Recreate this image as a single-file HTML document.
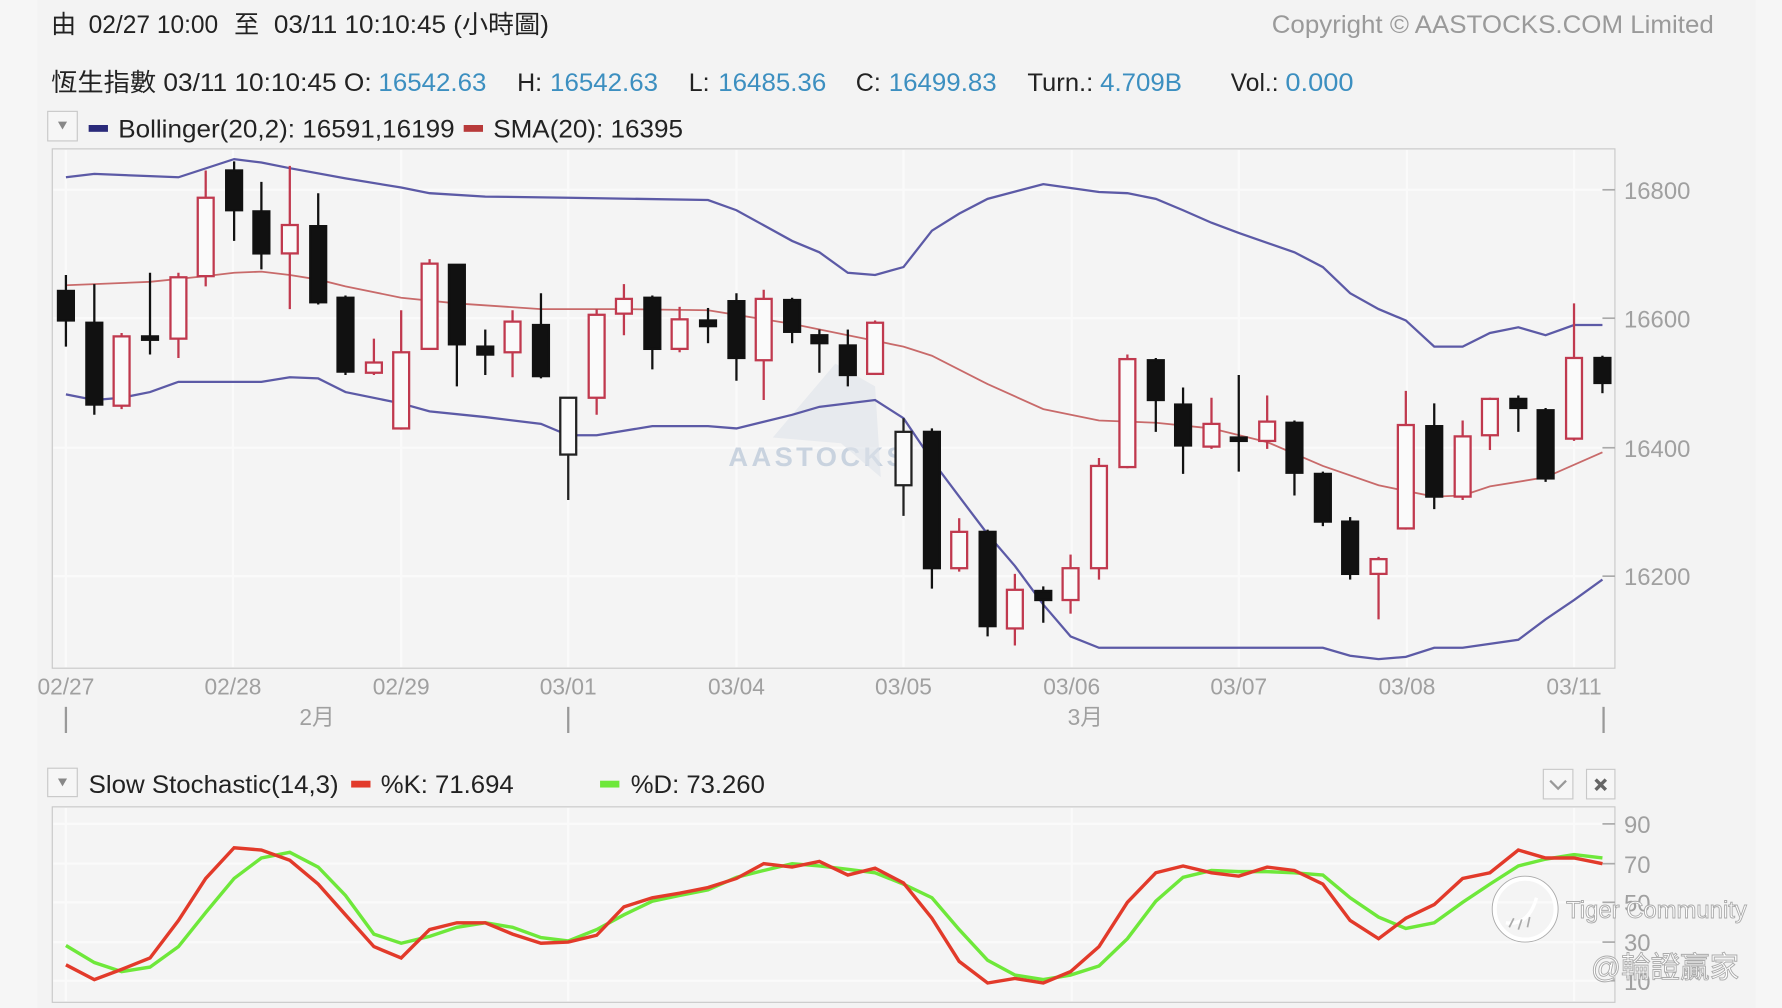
<!DOCTYPE html>
<html><head><meta charset="utf-8"><style>
html,body{margin:0;padding:0;background:#f4f4f4;}
svg{display:block;}
text{font-family:"Liberation Sans","Noto Sans CJK TC",sans-serif;}
</style></head><body>
<svg width="1782" height="1008" viewBox="0 0 1568 887" preserveAspectRatio="none" xmlns="http://www.w3.org/2000/svg">
<rect width="1568" height="887" fill="#f6f6f6"/>
<rect x="33" y="0" width="1512" height="887" fill="#f3f3f3"/>
<g font-size="22" fill="#222">
<text x="45" y="29">由</text>
<text x="78" y="29" textLength="114" lengthAdjust="spacingAndGlyphs">02/27 10:00</text>
<text x="206" y="29">至</text>
<text x="241" y="29" textLength="242" lengthAdjust="spacingAndGlyphs">03/11 10:10:45 (小時圖)</text>
</g>
<text x="1119" y="29" font-size="22" fill="#9a9a9a" textLength="389" lengthAdjust="spacingAndGlyphs">Copyright © AASTOCKS.COM Limited</text>
<g font-size="22" fill="#222">
<text x="45" y="80" textLength="282" lengthAdjust="spacingAndGlyphs">恆生指數 03/11 10:10:45 O:</text>
<text x="333" y="80" fill="#3c8fc0" textLength="95" lengthAdjust="spacingAndGlyphs">16542.63</text>
<text x="455" y="80">H:</text>
<text x="484" y="80" fill="#3c8fc0" textLength="95" lengthAdjust="spacingAndGlyphs">16542.63</text>
<text x="606" y="80">L:</text>
<text x="632" y="80" fill="#3c8fc0" textLength="95" lengthAdjust="spacingAndGlyphs">16485.36</text>
<text x="753" y="80">C:</text>
<text x="782" y="80" fill="#3c8fc0" textLength="95" lengthAdjust="spacingAndGlyphs">16499.83</text>
<text x="904" y="80" textLength="58" lengthAdjust="spacingAndGlyphs">Turn.:</text>
<text x="968" y="80" fill="#3c8fc0" textLength="72" lengthAdjust="spacingAndGlyphs">4.709B</text>
<text x="1083" y="80" textLength="42" lengthAdjust="spacingAndGlyphs">Vol.:</text>
<text x="1131" y="80" fill="#3c8fc0" textLength="60" lengthAdjust="spacingAndGlyphs">0.000</text>
</g>
<rect x="42" y="98" width="26" height="26" fill="#f6f6f6" stroke="#c8c8c8"/>
<path d="M51 107 L59 107 L55 114Z" fill="#888"/>
<rect x="78" y="110" width="17" height="6" fill="#2a2a7a"/>
<text x="104" y="121" font-size="22" fill="#222" textLength="296" lengthAdjust="spacingAndGlyphs">Bollinger(20,2): 16591,16199</text>
<rect x="408" y="110" width="17" height="6" fill="#b83a3a"/>
<text x="434" y="121" font-size="22" fill="#222" textLength="167" lengthAdjust="spacingAndGlyphs">SMA(20): 16395</text>
<!-- main chart -->
<rect x="46" y="131" width="1375" height="457" fill="#f4f4f4" stroke="#c8c8c8"/>
<g stroke="#fafafa" stroke-width="2">
<line x1="58" y1="132" x2="58" y2="587"/><line x1="205" y1="132" x2="205" y2="587"/><line x1="353" y1="132" x2="353" y2="587"/><line x1="500" y1="132" x2="500" y2="587"/><line x1="648" y1="132" x2="648" y2="587"/><line x1="795" y1="132" x2="795" y2="587"/><line x1="943" y1="132" x2="943" y2="587"/><line x1="1090" y1="132" x2="1090" y2="587"/><line x1="1238" y1="132" x2="1238" y2="587"/><line x1="1385" y1="132" x2="1385" y2="587"/>
<line x1="47" y1="167" x2="1420" y2="167"/><line x1="47" y1="280" x2="1420" y2="280"/><line x1="47" y1="394" x2="1420" y2="394"/><line x1="47" y1="507" x2="1420" y2="507"/>
</g>
<g stroke="#aaa" stroke-width="1.5"><line x1="1410" y1="167" x2="1421" y2="167"/><line x1="1410" y1="280" x2="1421" y2="280"/><line x1="1410" y1="394" x2="1421" y2="394"/><line x1="1410" y1="507" x2="1421" y2="507"/></g>
<g font-size="21" fill="#a0a0a0"><text x="1429" y="175">16800</text><text x="1429" y="288">16600</text><text x="1429" y="402">16400</text><text x="1429" y="515">16200</text></g>
<text x="720" y="410" font-size="24" fill="#c9d3df" text-anchor="middle" font-weight="bold" letter-spacing="3">AASTOCKS</text>
<path d="M680 385 L735 320 L770 340 L775 420 L740 390 Z" fill="#dde3ea" opacity="0.6"/>
<polyline fill="none" stroke="#5c5aa6" stroke-width="2" points="58,156 83,153 132,155 157,156 206,140 230,143 255,148 304,157 353,165 378,170 427,173 500,174 623,176 648,185 697,212 721,222 746,240 770,242 795,235 820,203 844,188 869,175 918,162 967,169 992,170 1017,175 1041,185 1066,196 1090,205 1139,222 1164,235 1188,258 1213,272 1237,282 1262,305 1287,305 1311,293 1336,288 1360,295 1385,286 1410,286"/>
<polyline fill="none" stroke="#5c5aa6" stroke-width="2" points="58,347 83,352 107,350 132,345 157,336 230,336 255,332 280,333 304,345 353,355 378,362 427,367 476,373 500,383 525,383 574,375 623,375 648,377 697,365 721,358 770,352 795,368 820,405 844,437 869,470 893,498 918,532 942,560 967,570 992,570 1090,570 1139,570 1164,570 1188,577 1213,580 1237,578 1262,570 1287,570 1336,563 1360,545 1385,528 1410,510"/>
<polyline fill="none" stroke="#c86a6a" stroke-width="1.6" points="58,251 83,250 132,248 181,243 206,240 230,239 255,242 280,246 304,252 353,262 402,267 476,272 549,272 623,273 697,285 746,295 795,305 820,313 869,338 918,360 967,370 1017,372 1066,377 1115,389 1164,410 1213,427 1237,432 1262,437 1287,436 1311,428 1360,420 1410,398"/>
<g stroke-width="2">
<g stroke="#111" fill="#111">
<line x1="58" y1="242" x2="58" y2="305"/><rect x="51" y="256" width="14" height="26"/>
<line x1="83" y1="250" x2="83" y2="365"/><rect x="76" y="284" width="14" height="72"/>
<line x1="132" y1="240" x2="132" y2="312"/><rect x="125" y="296" width="14" height="3"/>
<line x1="206" y1="142" x2="206" y2="212"/><rect x="199" y="150" width="14" height="35"/>
<line x1="230" y1="160" x2="230" y2="237"/><rect x="223" y="186" width="14" height="37"/>
<line x1="280" y1="170" x2="280" y2="268"/><rect x="273" y="199" width="14" height="67"/>
<line x1="304" y1="260" x2="304" y2="330"/><rect x="297" y="262" width="14" height="65"/>
<line x1="402" y1="233" x2="402" y2="340"/><rect x="395" y="233" width="14" height="70"/>
<line x1="427" y1="290" x2="427" y2="330"/><rect x="420" y="305" width="14" height="7"/>
<line x1="476" y1="258" x2="476" y2="333"/><rect x="469" y="286" width="14" height="45"/>
<line x1="574" y1="260" x2="574" y2="325"/><rect x="567" y="262" width="14" height="45"/>
<line x1="623" y1="271" x2="623" y2="302"/><rect x="616" y="282" width="14" height="5"/>
<line x1="648" y1="258" x2="648" y2="335"/><rect x="641" y="265" width="14" height="50"/>
<line x1="697" y1="262" x2="697" y2="302"/><rect x="690" y="264" width="14" height="28"/>
<line x1="721" y1="290" x2="721" y2="328"/><rect x="714" y="295" width="14" height="7"/>
<line x1="746" y1="290" x2="746" y2="340"/><rect x="739" y="304" width="14" height="26"/>
<line x1="820" y1="377" x2="820" y2="518"/><rect x="813" y="380" width="14" height="120"/>
<line x1="869" y1="466" x2="869" y2="560"/><rect x="862" y="468" width="14" height="83"/>
<line x1="918" y1="516" x2="918" y2="548"/><rect x="911" y="520" width="14" height="8"/>
<line x1="1017" y1="315" x2="1017" y2="380"/><rect x="1010" y="317" width="14" height="35"/>
<line x1="1041" y1="341" x2="1041" y2="417"/><rect x="1034" y="356" width="14" height="36"/>
<line x1="1090" y1="330" x2="1090" y2="415"/><rect x="1083" y="385" width="14" height="3"/>
<line x1="1139" y1="370" x2="1139" y2="436"/><rect x="1132" y="372" width="14" height="44"/>
<line x1="1164" y1="415" x2="1164" y2="463"/><rect x="1157" y="417" width="14" height="42"/>
<line x1="1188" y1="455" x2="1188" y2="510"/><rect x="1181" y="459" width="14" height="46"/>
<line x1="1262" y1="355" x2="1262" y2="448"/><rect x="1255" y="375" width="14" height="62"/>
<line x1="1336" y1="348" x2="1336" y2="380"/><rect x="1329" y="351" width="14" height="8"/>
<line x1="1360" y1="359" x2="1360" y2="424"/><rect x="1353" y="361" width="14" height="60"/>
<line x1="1410" y1="313" x2="1410" y2="346"/><rect x="1403" y="315" width="14" height="22"/>
</g>
<g stroke="#222" fill="#fafafa">
<line x1="500" y1="350" x2="500" y2="440"/><rect x="493" y="350" width="14" height="50"/>
<line x1="795" y1="368" x2="795" y2="454"/><rect x="788" y="380" width="14" height="47"/>
</g>
<g stroke="#c0394e" fill="#fafafa">
<line x1="107" y1="293" x2="107" y2="360"/><rect x="100" y="296" width="14" height="61"/>
<line x1="157" y1="240" x2="157" y2="315"/><rect x="150" y="244" width="14" height="54"/>
<line x1="181" y1="150" x2="181" y2="252"/><rect x="174" y="174" width="14" height="69"/>
<line x1="255" y1="146" x2="255" y2="272"/><rect x="248" y="198" width="14" height="25"/>
<line x1="329" y1="298" x2="329" y2="330"/><rect x="322" y="319" width="14" height="9"/>
<line x1="353" y1="273" x2="353" y2="378"/><rect x="346" y="310" width="14" height="67"/>
<line x1="378" y1="228" x2="378" y2="308"/><rect x="371" y="232" width="14" height="75"/>
<line x1="451" y1="273" x2="451" y2="332"/><rect x="444" y="283" width="14" height="27"/>
<line x1="525" y1="272" x2="525" y2="365"/><rect x="518" y="277" width="14" height="73"/>
<line x1="549" y1="250" x2="549" y2="295"/><rect x="542" y="263" width="14" height="13"/>
<line x1="598" y1="270" x2="598" y2="310"/><rect x="591" y="281" width="14" height="26"/>
<line x1="672" y1="255" x2="672" y2="352"/><rect x="665" y="263" width="14" height="54"/>
<line x1="770" y1="282" x2="770" y2="330"/><rect x="763" y="284" width="14" height="45"/>
<line x1="844" y1="456" x2="844" y2="503"/><rect x="837" y="468" width="14" height="32"/>
<line x1="893" y1="505" x2="893" y2="568"/><rect x="886" y="519" width="14" height="34"/>
<line x1="942" y1="488" x2="942" y2="540"/><rect x="935" y="500" width="14" height="28"/>
<line x1="967" y1="403" x2="967" y2="510"/><rect x="960" y="410" width="14" height="90"/>
<line x1="992" y1="312" x2="992" y2="412"/><rect x="985" y="316" width="14" height="95"/>
<line x1="1066" y1="350" x2="1066" y2="395"/><rect x="1059" y="373" width="14" height="20"/>
<line x1="1115" y1="348" x2="1115" y2="395"/><rect x="1108" y="371" width="14" height="17"/>
<line x1="1213" y1="490" x2="1213" y2="545"/><rect x="1206" y="492" width="14" height="13"/>
<line x1="1237" y1="344" x2="1237" y2="466"/><rect x="1230" y="374" width="14" height="91"/>
<line x1="1287" y1="370" x2="1287" y2="440"/><rect x="1280" y="384" width="14" height="53"/>
<line x1="1311" y1="350" x2="1311" y2="396"/><rect x="1304" y="351" width="14" height="32"/>
<line x1="1385" y1="267" x2="1385" y2="388"/><rect x="1378" y="315" width="14" height="71"/>
</g>
</g>
<g font-size="20" fill="#a0a0a0" text-anchor="middle">
<text x="58" y="611">02/27</text><text x="205" y="611">02/28</text><text x="353" y="611">02/29</text><text x="500" y="611">03/01</text><text x="648" y="611">03/04</text><text x="795" y="611">03/05</text><text x="943" y="611">03/06</text><text x="1090" y="611">03/07</text><text x="1238" y="611">03/08</text><text x="1385" y="611">03/11</text>
<text x="279" y="638">2月</text><text x="955" y="638">3月</text>
</g>
<g stroke="#999" stroke-width="2"><line x1="58" y1="622" x2="58" y2="645"/><line x1="500" y1="622" x2="500" y2="645"/><line x1="1411" y1="622" x2="1411" y2="645"/></g>
<!-- lower panel -->
<rect x="42" y="676" width="26" height="25" fill="#f6f6f6" stroke="#c8c8c8"/>
<path d="M51 685 L59 685 L55 692Z" fill="#888"/>
<text x="78" y="698" font-size="22" fill="#222" textLength="220" lengthAdjust="spacingAndGlyphs">Slow Stochastic(14,3)</text>
<rect x="309" y="687" width="17" height="6" fill="#e23a2a"/>
<text x="335" y="698" font-size="22" fill="#222" textLength="117" lengthAdjust="spacingAndGlyphs">%K: 71.694</text>
<rect x="528" y="687" width="17" height="6" fill="#6ee83a"/>
<text x="555" y="698" font-size="22" fill="#222" textLength="118" lengthAdjust="spacingAndGlyphs">%D: 73.260</text>
<line x1="548" y1="714" x2="585" y2="714" stroke="#ddd" stroke-width="2"/>
<rect x="1358" y="677" width="26" height="26" fill="#f6f6f6" stroke="#c8c8c8"/>
<path d="M1364 687 L1371 694 L1378 687" fill="none" stroke="#999" stroke-width="2"/>
<rect x="1396" y="677" width="25" height="26" fill="#f6f6f6" stroke="#c8c8c8"/>
<path d="M1404 686 L1413 695 M1413 686 L1404 695" stroke="#666" stroke-width="3"/>
<rect x="46" y="710" width="1375" height="172" fill="#f4f4f4" stroke="#c8c8c8"/>
<g stroke="#fafafa" stroke-width="2">
<line x1="47" y1="725" x2="1420" y2="725"/><line x1="47" y1="760" x2="1420" y2="760"/><line x1="47" y1="794" x2="1420" y2="794"/><line x1="47" y1="829" x2="1420" y2="829"/><line x1="47" y1="863" x2="1420" y2="863"/>
<line x1="58" y1="711" x2="58" y2="881"/><line x1="500" y1="711" x2="500" y2="881"/><line x1="943" y1="711" x2="943" y2="881"/><line x1="1385" y1="711" x2="1385" y2="881"/>
</g>
<g stroke="#aaa" stroke-width="1.5"><line x1="1410" y1="725" x2="1421" y2="725"/><line x1="1410" y1="760" x2="1421" y2="760"/><line x1="1410" y1="794" x2="1421" y2="794"/><line x1="1410" y1="829" x2="1421" y2="829"/><line x1="1410" y1="863" x2="1421" y2="863"/></g>
<g font-size="21" fill="#a0a0a0"><text x="1429" y="733">90</text><text x="1429" y="768">70</text><text x="1429" y="802">50</text><text x="1429" y="837">30</text><text x="1429" y="871">10</text></g>
<polyline fill="none" stroke="#6ee83a" stroke-width="3" points="58,832 83,847 107,855 132,851 157,833 181,803 206,773 230,755 255,750 280,763 304,788 329,822 353,830 378,824 402,816 427,812 451,816 476,825 500,828 525,818 549,805 574,793 598,788 623,783 648,772 672,766 697,760 721,762 746,765 770,768 795,778 820,790 844,818 869,845 893,858 918,862 942,858 967,850 992,826 1017,793 1041,772 1066,766 1090,767 1115,767 1139,768 1164,770 1188,790 1213,807 1237,817 1262,812 1287,794 1311,778 1336,762 1360,756 1385,752 1410,755"/>
<polyline fill="none" stroke="#e23a2a" stroke-width="3" points="58,849 83,862 107,853 132,843 157,810 181,773 206,746 230,748 255,757 280,778 304,805 329,833 353,843 378,818 402,812 427,812 451,822 476,830 500,829 525,823 549,798 574,790 598,786 623,781 648,773 672,760 697,763 721,758 746,770 770,764 795,777 820,808 844,846 869,865 893,861 918,865 942,855 967,833 992,794 1017,768 1041,762 1066,768 1090,771 1115,763 1139,766 1164,778 1188,810 1213,826 1237,808 1262,796 1287,773 1311,768 1336,748 1360,755 1385,755 1410,760"/>
<!-- watermark -->
<circle cx="1342" cy="800" r="27" fill="none" stroke="#fff" stroke-width="4"/>
<circle cx="1342" cy="800" r="29" fill="none" stroke="#aaa" stroke-width="0.8"/>
<path d="M1325 812 Q1345 815 1352 790" fill="none" stroke="#fff" stroke-width="3"/>
<path d="M1328 816 L1332 808 M1336 818 L1339 809 M1344 816 L1346 807" stroke="#aaa" stroke-width="1.5"/>
<text x="1378" y="808" font-size="21" fill="#fff" stroke="#aaa" stroke-width="0.8">Tiger Community</text>
<text x="1400" y="860" font-size="26" fill="#fff" stroke="#aaa" stroke-width="0.8">@輪證贏家</text>
</svg>
</body></html>
